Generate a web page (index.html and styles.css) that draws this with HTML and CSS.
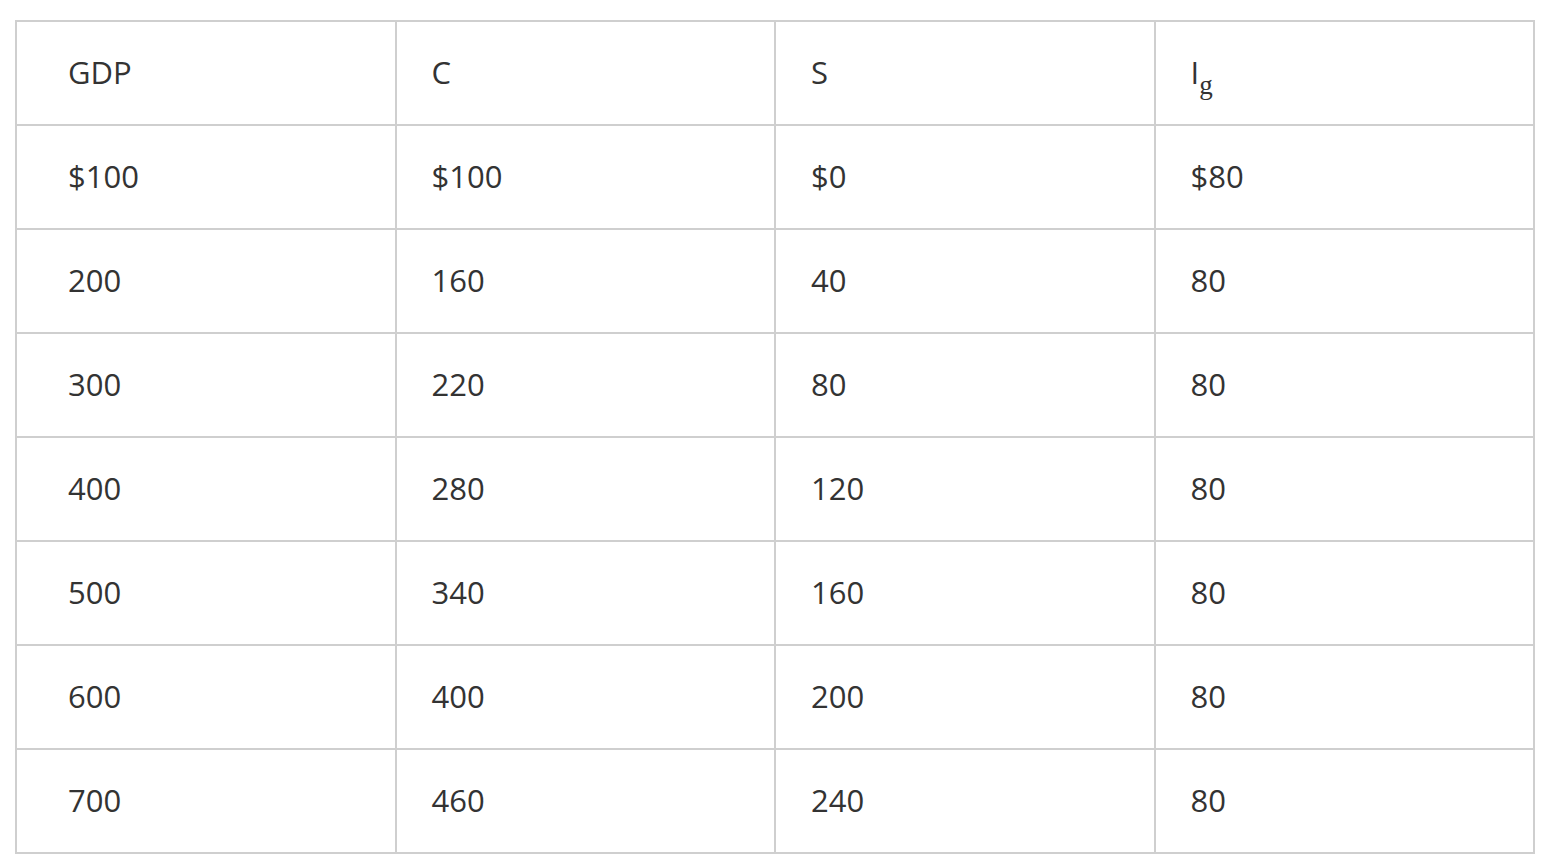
FILE: index.html
```html
<!DOCTYPE html>
<html>
<head>
<meta charset="utf-8">
<link rel="stylesheet" href="styles.css">
</head>
<body>
<table class="data">
  <tr><td>GDP</td><td>C</td><td>S</td><td>I<span class="sub">g</span></td></tr>
  <tr><td>$100</td><td>$100</td><td>$0</td><td>$80</td></tr>
  <tr><td>200</td><td>160</td><td>40</td><td>80</td></tr>
  <tr><td>300</td><td>220</td><td>80</td><td>80</td></tr>
  <tr><td>400</td><td>280</td><td>120</td><td>80</td></tr>
  <tr><td>500</td><td>340</td><td>160</td><td>80</td></tr>
  <tr><td>600</td><td>400</td><td>200</td><td>80</td></tr>
  <tr><td>700</td><td>460</td><td>240</td><td>80</td></tr>
</table>
</body>
</html>
```
FILE: styles.css
```css
html, body {
  margin: 0;
  background: #fff;
}
body {
  padding: 20px 0 0 15px;
  font-family: "Open Sans", "Liberation Sans", sans-serif;
  color: #333;
}
.data {
  border-collapse: collapse;
  table-layout: fixed;
  width: 1520px;
}
.data td {
  border: 2px solid #cfcfcf;
  font-size: 31px;
  line-height: 38px;
  padding: 31px 34px 33px 35px;
  text-align: left;
  vertical-align: middle;
}
.data td:first-child {
  padding-left: 51px;
}
.sub {
  font-family: "Liberation Serif", "Times New Roman", serif;
  font-size: 27px;
  line-height: 0;
  position: relative;
  top: 10px;
  margin-left: 0;
}
```
